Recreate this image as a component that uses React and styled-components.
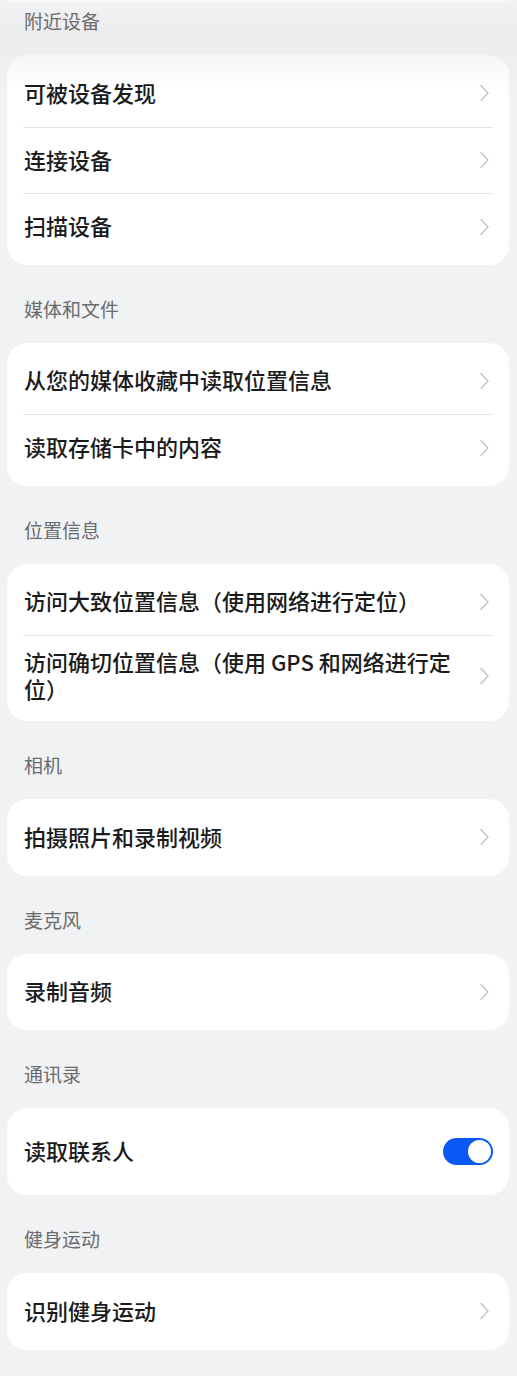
import React from "react";
import styled, { createGlobalStyle } from "styled-components";

const Global = createGlobalStyle`
  html, body { margin: 0; padding: 0; background: #f1f2f4; }
  body { font-family: "Noto Sans CJK SC", "Noto Sans", sans-serif; }
`;

const Page = styled.div`
  width: 517px;
  min-height: 1376px;
  background: linear-gradient(
    to bottom,
    #f3f3f4 0px,
    #ebecee 34px,
    #eceef0 56px,
    #f1f2f4 95px,
    #f1f2f4 100%
  );
  overflow: hidden;
`;

const TopCardEdge = styled.div`
  height: 3px;
  margin: -1px 8px 0 7px;
  background: #f8f8f8;
  border-radius: 0 0 20px 20px;
`;

const Header = styled.div`
  height: ${(p) => (p.$first ? 53 : 78)}px;
  box-sizing: border-box;
  padding: ${(p) => (p.$first ? 6 : 31)}px 24px 0;
  font-size: 19px;
  line-height: 26px;
  color: #6a6b6d;
`;

const Card = styled.div`
  margin: 0 8px 0 7px;
  background: ${(p) => (p.$faded ? "linear-gradient(to bottom, #f5f5f6 0px, #fcfcfc 22px, #fff 34px)" : "#fff")};
  border-radius: 20px;
  padding: 5px 16px;
`;

const Row = styled.div`
  display: flex;
  align-items: center;
  min-height: ${(p) => (p.$tall ? 77 : 66.5)}px;
  padding: 12px 0 14px 1px;
  box-sizing: border-box;
  gap: 14px;
  & + & {
    border-top: 1px solid #e2e2e4;
  }
`;

const Title = styled.div`
  flex: 1;
  font-size: 22px;
  line-height: 27px;
  color: #1b1b1c;
  font-weight: 500;
`;

const Chevron = styled.svg`
  width: 12px;
  height: 18px;
  flex: none;
  margin-right: 3px;
  margin-top: 2px;
`;

const Toggle = styled.div`
  width: 50px;
  height: 27px;
  border-radius: 14px;
  background: #0a59f7;
  display: flex;
  align-items: center;
  justify-content: flex-end;
  padding: 0 2px;
  box-sizing: border-box;
  flex: none;
  margin-top: 2px;
`;

const Knob = styled.div`
  width: 23px;
  height: 23px;
  border-radius: 50%;
  background: #fff;
`;

const Arrow = () => (
  <Chevron viewBox="0 0 12 18">
    <path d="M3 1.5 L10 9 L3 16.5" fill="none" stroke="#c6c6c8" strokeWidth="1.6" strokeLinecap="round" strokeLinejoin="round" />
  </Chevron>
);

const sections = [
  { title: "附近设备", items: ["可被设备发现", "连接设备", "扫描设备"] },
  { title: "媒体和文件", items: ["从您的媒体收藏中读取位置信息", "读取存储卡中的内容"] },
  { title: "位置信息", items: ["访问大致位置信息（使用网络进行定位）", "访问确切位置信息（使用 GPS 和网络进行定位）"] },
  { title: "相机", items: ["拍摄照片和录制视频"] },
  { title: "麦克风", items: ["录制音频"] },
  { title: "通讯录", items: ["读取联系人"], toggle: true },
  { title: "健身运动", items: ["识别健身运动"] },
];

export default function App() {
  return (
    <Page>
      <Global />
      <TopCardEdge />
      {sections.map((s, i) => (
        <React.Fragment key={s.title}>
          <Header $first={i === 0}>{s.title}</Header>
          <Card $faded={i === 0}>
            {s.items.map((it) => (
              <Row key={it} $tall={s.toggle}>
                <Title>{it}</Title>
                {s.toggle ? (
                  <Toggle>
                    <Knob />
                  </Toggle>
                ) : (
                  <Arrow />
                )}
              </Row>
            ))}
          </Card>
        </React.Fragment>
      ))}
    </Page>
  );
}
